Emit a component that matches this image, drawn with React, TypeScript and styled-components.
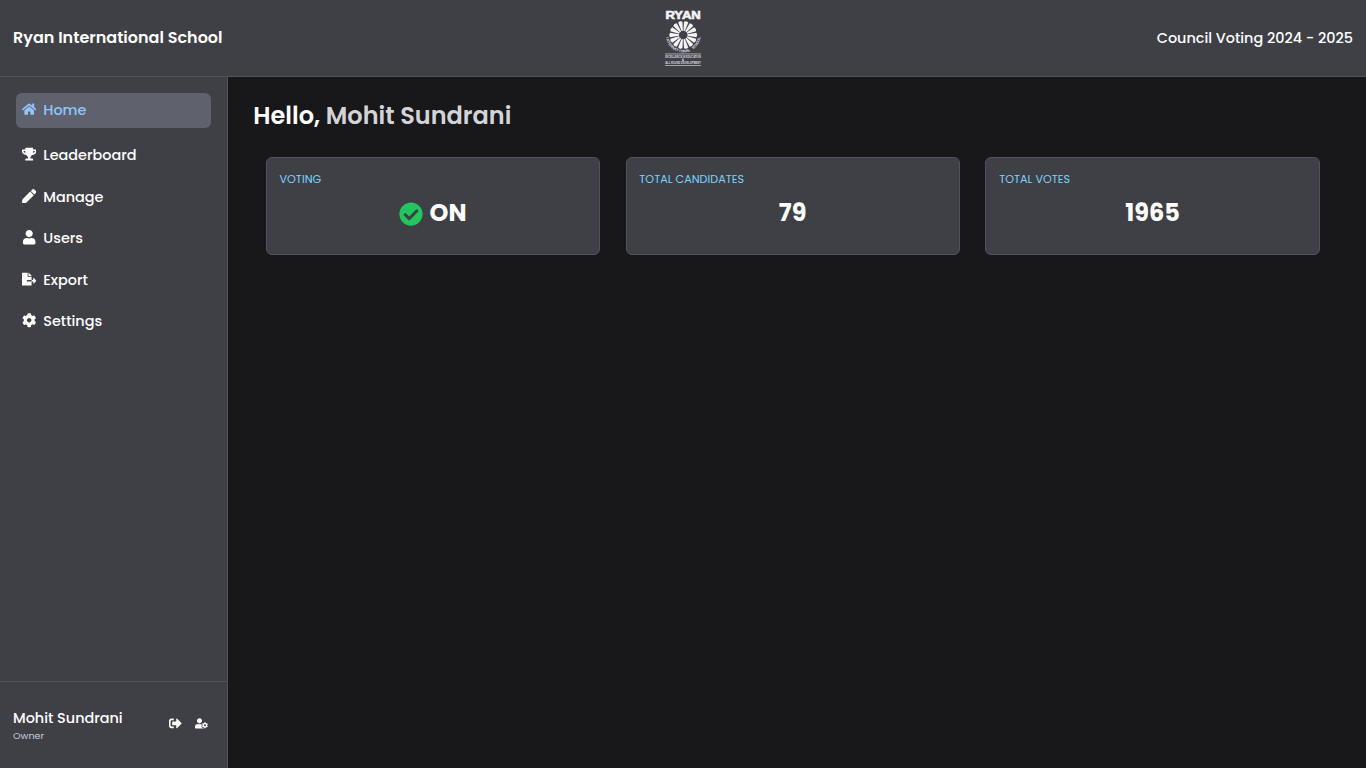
import React from 'react';
import styled, { createGlobalStyle } from 'styled-components';
import {
  FaHome, FaTrophy, FaPen, FaUser, FaFileExport, FaCog,
  FaSignOutAlt, FaUserCog, FaCheckCircle,
} from 'react-icons/fa';

const GlobalStyle = createGlobalStyle`
  * { box-sizing: border-box; }
  body {
    margin: 0;
    background: #18181b;
    color: #fff;
    font-family: Poppins, Inter, sans-serif;
    overflow: hidden;
  }
`;

const Page = styled.div`
  display: flex;
  flex-direction: column;
  height: 100vh;
`;

const Header = styled.header`
  display: grid;
  grid-template-columns: 1fr auto 1fr;
  align-items: center;
  height: 77px;
  padding: 0 13px;
  background: #3f3f46;
  border-bottom: 1px solid #52525b;
`;

const School = styled.span`
  padding-bottom: 2px;
  font-size: 16px;
  font-weight: 600;
`;

const Event = styled.span`
  justify-self: end;
  font-size: 14.4px;
  font-weight: 500;
`;

const Body = styled.div`
  display: flex;
  flex: 1;
  min-height: 0;
`;

const Sidebar = styled.aside`
  display: flex;
  flex-direction: column;
  justify-content: space-between;
  width: 228px;
  background: #3f3f46;
  border-right: 1px solid #52525b;
`;

const Nav = styled.nav`
  display: flex;
  flex-direction: column;
  gap: 6.4px;
  padding: 16px;
`;

const NavItem = styled.a<{ $active?: boolean }>`
  display: flex;
  align-items: center;
  gap: 6.9px;
  height: 35.1px;
  padding: 0 6px;
  margin-bottom: ${(p) => (p.$active ? '3.7px' : '0')};
  border-radius: 6px;
  background: ${(p) => (p.$active ? '#5f616c' : 'transparent')};
  color: ${(p) => (p.$active ? '#93c5fd' : '#fff')};
  font-size: 14.4px;
  font-weight: 500;

  svg {
    width: 14.4px;
    height: 14.4px;
    margin-bottom: 2.4px;
  }
`;

const Account = styled.div`
  display: flex;
  align-items: center;
  justify-content: space-between;
  height: 87px;
  padding: 0 19px 0 13px;
  border-top: 1px solid #52525b;
`;

const Identity = styled.div`
  display: flex;
  flex-direction: column;
  padding-top: 1px;
`;

const UserName = styled.span`
  font-size: 14.4px;
  line-height: 21px;
  font-weight: 500;
`;

const Role = styled.span`
  font-size: 9.6px;
  line-height: 14px;
  color: #c7cbdc;
`;

const Actions = styled.div`
  display: flex;
  gap: 13px;

  svg {
    width: 12.8px;
    height: 12.8px;
    margin-bottom: 3px;
  }
`;

const Main = styled.main`
  flex: 1;
  padding: 20px 26px 0 25.3px;
`;

const Greeting = styled.h1`
  margin: 0;
  height: 38px;
  line-height: 38px;
  font-size: 24px;
  font-weight: 600;
`;

const Highlight = styled.span`
  color: #d4d4d8;
`;

const Cards = styled.section`
  display: grid;
  grid-template-columns: repeat(3, 1fr);
  gap: 25.6px;
  padding: 22px 20.4px 0 12.4px;
`;

const Card = styled.article`
  display: flex;
  flex-direction: column;
  height: 98px;
  padding: 12px 12.8px;
  border: 1px solid #52525b;
  border-radius: 6px;
  background: #3f3f46;
`;

const Label = styled.span`
  font-size: 11.2px;
  line-height: 18px;
  color: #7dd3fc;
`;

const Value = styled.div`
  display: flex;
  align-items: center;
  justify-content: center;
  gap: 6.4px;
  height: 48.5px;
  font-size: 24px;
  font-weight: 700;

  svg {
    width: 24px;
    height: 24px;
    margin-top: 4px;
    color: #22c55e;
  }
`;

const Emblem = styled.svg`
  display: block;
  width: 40px;
  height: 60px;
  overflow: visible;
`;

const PETALS = 14;
const RING = 'INTERNATIONAL SCHOOL'.split('');

function Logo() {
  return (
    <Emblem viewBox="0 0 40 60" fill="#f4f4f5" fontFamily="Liberation Sans, sans-serif" fontWeight="700">
      <text x="2.4" y="11.2" fontSize="10.8" textLength="35.4" lengthAdjust="spacingAndGlyphs" stroke="#f4f4f5" strokeWidth="0.6">RYAN</text>
      <g transform="translate(20.2 27)">
        {Array.from({ length: PETALS }, (_, i) => (
          <path key={i} d="M-0.7 -4.2 L-2.2 -13.2 Q0 -14.8 2.2 -13.2 L0.7 -4.2 Z" transform={`rotate(${((i + 0.5) * 360) / PETALS})`} />
        ))}
        {RING.map((c, i) => (
          <text key={i} y="17.4" fontSize="3.8" textAnchor="middle" fill="#dcdce0" transform={`rotate(${80 - (i * 160) / (RING.length - 1)})`}>{c}</text>
        ))}
      </g>
      <rect x="2" y="45.6" width="36" height="0.7" fill="#d0d0d4" />
      <text x="2.2" y="49.8" fontSize="2.8" fill="#dcdce0" textLength="35.6" lengthAdjust="spacingAndGlyphs">EXCELLENCE IN EDUCATION</text>
      <text x="20" y="52.9" fontSize="2.6" textAnchor="middle">&amp;</text>
      <text x="2.2" y="55.8" fontSize="2.8" fill="#dcdce0" textLength="35.6" lengthAdjust="spacingAndGlyphs">ALL ROUND DEVELOPMENT</text>
      <rect x="2" y="57.1" width="36" height="0.7" fill="#d0d0d4" />
    </Emblem>
  );
}

const links = [
  { label: 'Home', Icon: FaHome, active: true },
  { label: 'Leaderboard', Icon: FaTrophy },
  { label: 'Manage', Icon: FaPen },
  { label: 'Users', Icon: FaUser },
  { label: 'Export', Icon: FaFileExport },
  { label: 'Settings', Icon: FaCog },
];

export default function App() {
  return (
    <Page>
      <GlobalStyle />
      <Header>
        <School>Ryan International School</School>
        <Logo />
        <Event>Council Voting 2024 - 2025</Event>
      </Header>
      <Body>
        <Sidebar>
          <Nav>
            {links.map(({ label, Icon, active }) => (
              <NavItem key={label} $active={active}>
                <Icon />
                <span>{label}</span>
              </NavItem>
            ))}
          </Nav>
          <Account>
            <Identity>
              <UserName>Mohit Sundrani</UserName>
              <Role>Owner</Role>
            </Identity>
            <Actions>
              <FaSignOutAlt />
              <FaUserCog />
            </Actions>
          </Account>
        </Sidebar>
        <Main>
          <Greeting>
            Hello, <Highlight>Mohit Sundrani</Highlight>
          </Greeting>
          <Cards>
            <Card>
              <Label>VOTING</Label>
              <Value><FaCheckCircle />ON</Value>
            </Card>
            <Card>
              <Label>TOTAL CANDIDATES</Label>
              <Value>79</Value>
            </Card>
            <Card>
              <Label>TOTAL VOTES</Label>
              <Value>1965</Value>
            </Card>
          </Cards>
        </Main>
      </Body>
    </Page>
  );
}
